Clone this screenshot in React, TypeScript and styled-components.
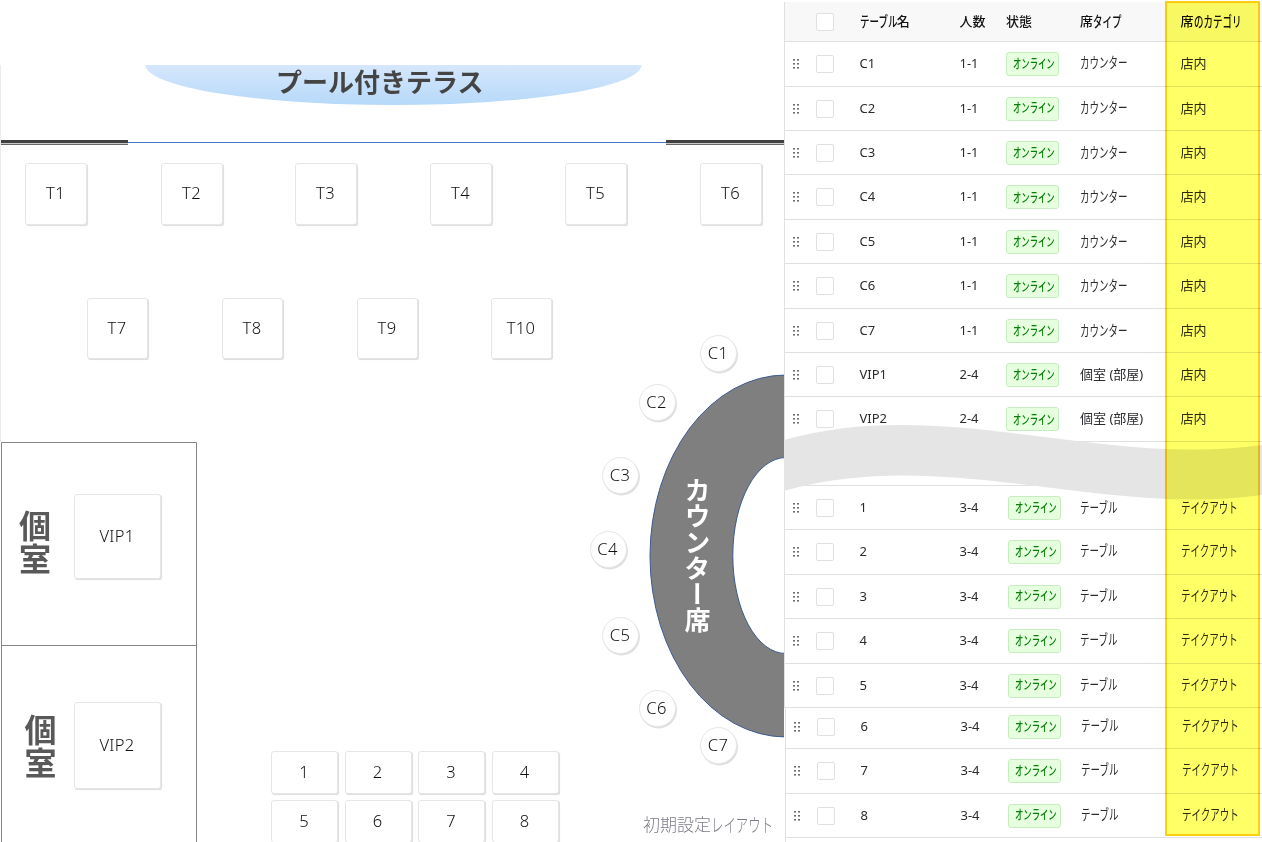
import React from "react";
import styled, { createGlobalStyle } from "styled-components";

const Global = createGlobalStyle`
  * { box-sizing: border-box; }
  body {
    margin: 0;
    background: #fff;
    overflow: hidden;
    font-family: "Noto Sans", "Noto Sans CJK JP", sans-serif;
    color: #2b2b2f;
  }
`;

const Page = styled.main`
  display: flex;
  width: 1262px;
  height: 842px;
  overflow: hidden;
`;

/* ---------- condensed kana ---------- */

const KANA_X = 0.73;
const KANA_Y = 1.1;

const KanaRun = styled.span<{ $n: number }>`
  display: inline-block;
  transform: scale(${KANA_X}, ${KANA_Y});
  transform-origin: 0 50%;
  margin-right: ${(p) => -(1 - KANA_X) * p.$n}em;
`;

function Jp({ children }: { children: string }) {
  const runs = children.split(/([\u3040-\u30ff]+)/).filter(Boolean);
  return (
    <span>
      {runs.map((run, i) =>
        /[\u3040-\u30ff]/.test(run) ? (
          <KanaRun key={i} $n={run.length}>
            {run}
          </KanaRun>
        ) : (
          run
        )
      )}
    </span>
  );
}

/* ---------- floor map ---------- */

const Floor = styled.section`
  position: relative;
  flex: 0 0 784px;
  height: 842px;
  overflow: hidden;
`;

const Scenery = styled.svg`
  position: absolute;
  inset: 0;
  display: block;
`;

const Seat = styled.div<{ $x: number; $y: number; $w: number; $h: number; $round?: boolean }>`
  position: absolute;
  left: ${(p) => p.$x}px;
  top: ${(p) => p.$y}px;
  width: ${(p) => p.$w}px;
  height: ${(p) => p.$h}px;
  display: flex;
  align-items: center;
  justify-content: center;
  padding: 0 1px 1px 0;
  background: #fff;
  border: 1px solid #e6e6e8;
  border-radius: ${(p) => (p.$round ? "50%" : "3px")};
  box-shadow: ${(p) => (p.$round ? "1px 1.5px 0 #dfdfe1" : "1px 1px 0 #dfdfe1, 1px 1px 1px #e4e4e6")};
  color: #111114;
  font-size: 16.5px;
  font-weight: 300;
  line-height: 20px;
  letter-spacing: 0.3px;
`;

const PlaceName = styled.div<{ $x: number; $y: number }>`
  position: absolute;
  left: ${(p) => p.$x}px;
  top: ${(p) => p.$y}px;
  white-space: nowrap;
  font-family: "Noto Sans CJK JP", sans-serif;
`;

const TerraceName = styled(PlaceName)`
  font-size: 26px;
  line-height: 34px;
  font-weight: 700;
  color: #444;
`;

const RoomName = styled(PlaceName)`
  width: 32px;
  white-space: normal;
  font-size: 32px;
  line-height: 32.5px;
  font-weight: 700;
  color: #595959;
`;

const CounterName = styled(PlaceName)`
  writing-mode: vertical-rl;
  font-size: 26px;
  line-height: 26px;
  font-weight: 700;
  color: #fff;
`;

const LayoutName = styled(PlaceName)`
  font-size: 17px;
  line-height: 24px;
  font-weight: 300;
  color: #7c7c88;
`;

type SeatData = { name: string; x: number; y: number; w: number; h: number; round?: boolean };

const seats: SeatData[] = [
  ...[25, 161, 295, 430, 565, 700].map((x, i) => ({ name: `T${i + 1}`, x, y: 163, w: 62, h: 61.5 })),
  ...[87, 222, 357, 491].map((x, i) => ({ name: `T${i + 7}`, x, y: 298, w: 61, h: 61 })),
  { name: "VIP1", x: 74, y: 494, w: 87, h: 85 },
  { name: "VIP2", x: 74, y: 702, w: 87, h: 86.5 },
  ...[
    [700, 335],
    [638.5, 384],
    [602, 457],
    [589.5, 531],
    [602, 616.5],
    [638.5, 690],
    [700, 727],
  ].map(([x, y], i) => ({ name: `C${i + 1}`, x, y, w: 37, h: 37, round: true })),
  ...[0, 1, 2, 3, 4, 5, 6, 7].map((i) => ({
    name: `${i + 1}`,
    x: [271, 344.5, 418, 491.5][i % 4],
    y: i < 4 ? 751 : 800,
    w: 67,
    h: 43,
  })),
];

function FloorMap() {
  return (
    <Floor>
      <Scenery width="784" height="842" viewBox="0 0 784 842">
        <defs>
          <linearGradient id="pool" x1="0" y1="0" x2="0" y2="1">
            <stop offset="0" stopColor="#d6e7fc" />
            <stop offset="1" stopColor="#b6d9f9" />
          </linearGradient>
        </defs>
        <rect x="0" y="65" width="1" height="377" fill="#ececee" />
        <path d="M145.500 65 A248 40 0 0 0 641.500 65 Z" fill="url(#pool)" />
        <rect x="128" y="142" width="538" height="1" fill="#4478c4" />
        {[
          [1, 127],
          [666, 118],
        ].map(([x, w]) => (
          <g key={x}>
            <rect x={x} y="140" width={w} height="3" fill="#404040" />
            <rect x={x} y="143" width={w} height="1" fill="#c8c8c8" />
            <rect x={x} y="144" width={w} height="1" fill="#666" />
          </g>
        ))}
        <path d="M1.500 842 V442.500 H196.500 V842 M1.500 645.500 H196.500" fill="none" stroke="#858585" />
        <path
          d="M786 375 A136 181 0 0 0 786 737 V653.500 A53 98 0 0 1 732.800 555.500 A53.200 98 0 0 1 786 457.500 Z"
          fill="#7f7f7f"
          stroke="#3c5a92"
        />
      </Scenery>
      <TerraceName $x={276} $y={64}>プール付きテラス</TerraceName>
      <RoomName $x={19} $y={508}>個室</RoomName>
      <RoomName $x={24.5} $y={712}>個室</RoomName>
      <CounterName $x={684} $y={477}>カウンター席</CounterName>
      {seats.map((s) => (
        <Seat key={s.name} $x={s.x} $y={s.y} $w={s.w} $h={s.h} $round={s.round}>
          {s.name}
        </Seat>
      ))}
      <LayoutName $x={643} $y={812}>
        <Jp>初期設定レイアウト</Jp>
      </LayoutName>
    </Floor>
  );
}

/* ---------- seat table ---------- */

const Panel = styled.section`
  position: relative;
  flex: 0 0 478px;
  height: 842px;
  padding-top: 2px;
`;

const Row = styled.div<{ $h: number; $head?: boolean; $inset?: boolean; $lift?: number }>`
  display: grid;
  grid-template-columns: 31px 43.5px 100px 46.5px 74px 100.5px 1fr;
  align-items: center;
  height: ${(p) => p.$h}px;
  margin-left: ${(p) => (p.$inset ? 1 : 0)}px;
  padding-bottom: ${(p) => p.$lift ?? 0}px;
  border-left: 1px solid #e0e0e2;
  border-bottom: 1px solid #e0e0e2;
  background: ${(p) => (p.$head ? "#f8f8f8" : "#fff")};
  font-size: 13px;
  line-height: 18px;
  font-weight: ${(p) => (p.$head ? 500 : 400)};
  white-space: nowrap;
`;

const Tail = styled.div`
  height: 4px;
  margin-left: 1px;
  border-left: 1px solid #e0e0e2;
`;

const Cell = styled.div<{ $drop?: number }>`
  min-width: 0;
  padding-bottom: ${(p) => p.$drop ?? 2}px;
`;

const HeadCell = styled(Cell)`
  font-family: "Noto Sans CJK JP", sans-serif;
  color: #111114;
  padding-bottom: 2px;
`;

const Grip = styled.svg`
  display: block;
  margin-left: 8px;
  fill: #6f6f73;
`;

const Checkbox = styled.span`
  display: block;
  width: 18px;
  height: 18px;
  border: 1px solid #e0e0e2;
  border-radius: 2px;
  background: #fff;
`;

const Badge = styled.span<{ $shift: number }>`
  display: flex;
  align-items: center;
  width: 53px;
  height: 24px;
  margin-left: ${(p) => p.$shift}px;
  padding: 0 0 3px 6px;
  border: 1px solid #c5edbd;
  border-radius: 3px;
  background: #e6ffdf;
  color: #088008;
  font-family: "Noto Sans CJK JP", sans-serif;
  font-size: 11.4px;
  font-weight: 500;
`;

const Torn = styled.svg`
  position: absolute;
  left: 0;
  top: 0;
`;

const Highlight = styled.div`
  position: absolute;
  left: 381px;
  top: 1px;
  width: 95px;
  height: 835px;
  border: 2px solid #ffcf10;
  background: #ffff66;
  mix-blend-mode: multiply;
`;

function GripDots() {
  return (
    <Grip width="6" height="10" viewBox="0 0 6 10">
      {[0, 4].map((x) => [0, 4, 8].map((y) => <rect key={`${x}${y}`} x={x} y={y} width="2" height="1.600" />))}
    </Grip>
  );
}

type RowData = { name: string; size: string; type: string; category: string; h: number };

const inside = (name: string, h: number): RowData => ({
  name,
  size: "1-1",
  type: "カウンター",
  category: "店内",
  h,
});
const vip = (name: string, h: number): RowData => ({
  name,
  size: "2-4",
  type: "個室 (部屋)",
  category: "店内",
  h,
});
const takeout = (name: string, h: number): RowData => ({
  name,
  size: "3-4",
  type: "テーブル",
  category: "テイクアウト",
  h,
});

const upper = [
  inside("C1", 45),
  inside("C2", 44),
  inside("C3", 44),
  inside("C4", 45),
  inside("C5", 44),
  inside("C6", 45),
  inside("C7", 44),
  vip("VIP1", 44),
  vip("VIP2", 45),
];
const lower = [takeout("1", 44), takeout("2", 45), takeout("3", 44), takeout("4", 45), takeout("5", 44)];
const last = [takeout("6", 41), takeout("7", 45), takeout("8", 44)];

function SeatRow({ row, inset, shift = 0 }: { row: RowData; inset?: boolean; shift?: number }) {
  return (
    <Row $h={row.h} $inset={inset} $lift={row.h === 41 ? 2 : 0}>
      <GripDots />
      <Checkbox />
      <Cell>{row.name}</Cell>
      <Cell>{row.size}</Cell>
      <Badge $shift={shift}>
        <Jp>オンライン</Jp>
      </Badge>
      <Cell $drop={2}>
        <Jp>{row.type}</Jp>
      </Cell>
      <Cell $drop={2}>
        <Jp>{row.category}</Jp>
      </Cell>
    </Row>
  );
}

function SeatTable() {
  return (
    <Panel>
      <Row $h={40} $head>
        <span />
        <Checkbox />
        {["テーブル名", "人数", "状態", "席タイプ", "席のカテゴリ"].map((t) => (
          <HeadCell key={t}>
            <Jp>{t}</Jp>
          </HeadCell>
        ))}
      </Row>
      {upper.map((r) => (
        <SeatRow key={r.name} row={r} />
      ))}
      <Row $h={44} />
      {lower.map((r) => (
        <SeatRow key={r.name} row={r} shift={2} />
      ))}
      {last.map((r) => (
        <SeatRow key={r.name} row={r} inset shift={1} />
      ))}
      <Tail />
      <Torn width="478" height="842" viewBox="0 0 478 842">
        <path
          d="M0 440 C159 395 319 468 478 445 V495 C319 518 159 445 0 491 Z"
          fill="#e5e5e5"
        />
      </Torn>
      <Highlight />
    </Panel>
  );
}

export default function App() {
  return (
    <Page>
      <Global />
      <FloorMap />
      <SeatTable />
    </Page>
  );
}
